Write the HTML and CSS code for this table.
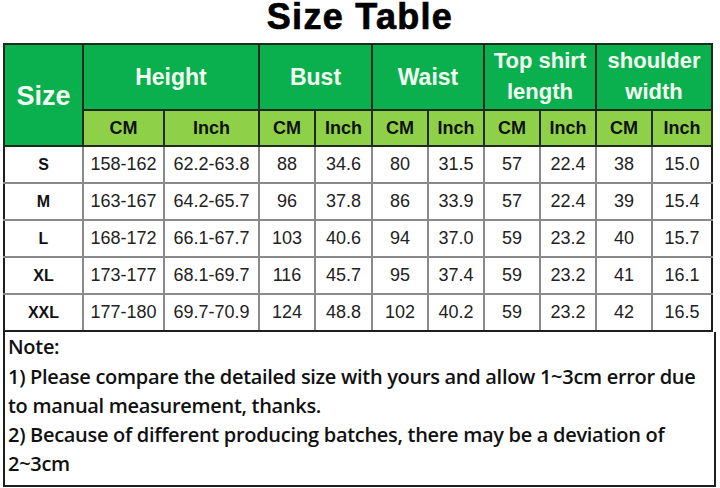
FILE: index.html
```html
<!DOCTYPE html>
<html>
<head>
<meta charset="utf-8">
<link rel="stylesheet" href="styles.css">
</head>
<body>
<div class="page">
  <h1 class="title">Size Table</h1>
  <table class="sizes">
    <colgroup>
      <col class="c-size"><col class="c-hcm"><col class="c-hin">
      <col class="c-n"><col class="c-n57"><col class="c-n"><col class="c-n">
      <col class="c-n"><col class="c-n"><col class="c-n"><col class="c-last">
    </colgroup>
    <thead>
      <tr class="head1">
        <th rowspan="2" class="size-h">Size</th>
        <th colspan="2">Height</th>
        <th colspan="2">Bust</th>
        <th colspan="2">Waist</th>
        <th colspan="2" class="two">Top shirt<br>length</th>
        <th colspan="2" class="two">shoulder<br>width</th>
      </tr>
      <tr class="head2">
        <th>CM</th><th>Inch</th><th>CM</th><th>Inch</th><th>CM</th><th>Inch</th><th>CM</th><th>Inch</th><th>CM</th><th>Inch</th>
      </tr>
    </thead>
    <tbody>
      <tr><td class="sz">S</td><td>158-162</td><td>62.2-63.8</td><td>88</td><td>34.6</td><td>80</td><td>31.5</td><td>57</td><td>22.4</td><td>38</td><td>15.0</td></tr>
      <tr><td class="sz">M</td><td>163-167</td><td>64.2-65.7</td><td>96</td><td>37.8</td><td>86</td><td>33.9</td><td>57</td><td>22.4</td><td>39</td><td>15.4</td></tr>
      <tr><td class="sz">L</td><td>168-172</td><td>66.1-67.7</td><td>103</td><td>40.6</td><td>94</td><td>37.0</td><td>59</td><td>23.2</td><td>40</td><td>15.7</td></tr>
      <tr><td class="sz">XL</td><td>173-177</td><td>68.1-69.7</td><td>116</td><td>45.7</td><td>95</td><td>37.4</td><td>59</td><td>23.2</td><td>41</td><td>16.1</td></tr>
      <tr><td class="sz">XXL</td><td>177-180</td><td>69.7-70.9</td><td>124</td><td>48.8</td><td>102</td><td>40.2</td><td>59</td><td>23.2</td><td>42</td><td>16.5</td></tr>
    </tbody>
  </table>
  <div class="note">
    <p>Note:</p>
    <p>1) Please compare the detailed size with yours and allow 1~3cm error due</p>
    <p>to manual measurement, thanks.</p>
    <p>2) Because of different producing batches, there may be a deviation of</p>
    <p>2~3cm</p>
  </div>
</div>
</body>
</html>
```
FILE: styles.css
```css
html, body {
  margin: 0;
  padding: 0;
  background: #fff;
}
.page {
  width: 720px;
  height: 488px;
  font-family: "Liberation Sans", Arial, sans-serif;
  color: #1a1a1a;
}
.title {
  margin: 0;
  height: 43px;
  line-height: 34px;
  text-align: center;
  font-size: 36px;
  font-weight: bold;
  color: #000;
  letter-spacing: 1.3px;
  -webkit-text-stroke: 0.7px #000;
  overflow: visible;
}
.sizes {
  margin-left: 3px;
  width: 708px;
  border-collapse: collapse;
  table-layout: fixed;
  border: 2px solid #1e1e1e;
}
.c-size { width: 79px; }
.c-hcm { width: 81px; }
.c-hin { width: 95px; }
.c-n { width: 56px; }
.c-n57 { width: 57px; }
.c-last { width: 60px; }
.sizes th {
  border: 2px solid #1e2a1e;
  padding: 0;
  font-weight: bold;
}
.head1 th {
  background: #0bb04e;
  color: #f4fff4;
  height: 58px;
  font-size: 23px;
  line-height: 31px;
}
.head1 .size-h {
  font-size: 27px;
  padding-top: 2px;
}
.head1 .two {
  font-size: 22px;
  line-height: 31px;
  padding-bottom: 2px;
}
.head2 th {
  background: #8fd049;
  color: #111;
  height: 34px;
  font-size: 18px;
}
.sizes td {
  border: 2px solid #8a8a8a;
  height: 35px;
  padding: 0;
  text-align: center;
  font-size: 18px;
  color: #222;
}
.sizes tbody tr td:first-child {
  border-left: 2px solid #1e1e1e;
}
.sizes tbody tr td:last-child {
  border-right: 2px solid #1e1e1e;
}
.sizes tbody tr:last-child td {
  border-bottom: 2px solid #1e1e1e;
}
.sizes td.sz {
  font-weight: bold;
  font-size: 16px;
  color: #111;
}
.note {
  margin-left: 3px;
  width: 706px;
  height: 153px;
  border: 2px solid #1e1e1e;
  border-top: none;
  padding: 0 0 0 3px;
  box-sizing: content-box;
  font-family: "Open Sans", "Noto Sans", sans-serif;
  font-weight: 600;
  font-size: 20px;
  color: #111;
  letter-spacing: -0.3px;
}
.note p {
  margin: 0;
  height: 29px;
  line-height: 29px;
  white-space: nowrap;
}
.note p:first-child {
  height: 30px;
}
```
